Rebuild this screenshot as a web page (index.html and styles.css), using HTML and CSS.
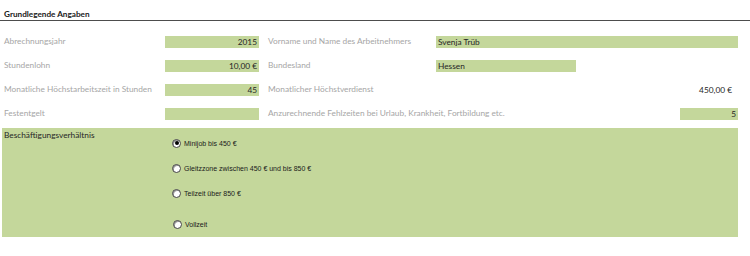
FILE: index.html
```html
<!DOCTYPE html>
<html lang="de">
<head>
<meta charset="utf-8">
<title>Grundlegende Angaben</title>
<link rel="stylesheet" href="styles.css">
</head>
<body>
<div class="page">
  <h1 class="title">Grundlegende Angaben</h1>
  <div class="grid">
    <div class="lbl">Abrechnungsjahr</div>
    <div class="cell">2015</div>
    <div class="lbl lbl2">Vorname und Name des Arbeitnehmers</div>
    <div class="cell cell-wide left">Svenja Trüb</div>

    <div class="lbl">Stundenlohn</div>
    <div class="cell">10,00 €</div>
    <div class="lbl lbl2">Bundesland</div>
    <div class="cell cell-mid left">Hessen</div>

    <div class="lbl">Monatliche Höchstarbeitszeit in Stunden</div>
    <div class="cell">45</div>
    <div class="lbl lbl2">Monatlicher Höchstverdienst</div>
    <div class="plain">450,00 €</div>

    <div class="lbl">Festentgelt</div>
    <div class="cell"></div>
    <div class="lbl lbl2">Anzurechnende Fehlzeiten bei Urlaub, Krankheit, Fortbildung etc.</div>
    <div class="cell cell-small">5</div>
  </div>
  <div class="box">
    <div class="box-title">Beschäftigungsverhältnis</div>
    <div class="radios">
      <label class="opt o1"><span class="radio checked"></span>Minijob bis 450 €</label>
      <label class="opt o2"><span class="radio"></span>Gleitzzone zwischen 450 € und bis 850 €</label>
      <label class="opt o3"><span class="radio"></span>Teilzeit über 850 €</label>
      <label class="opt o4"><span class="radio"></span>Vollzeit</label>
    </div>
  </div>
</div>
</body>
</html>
```
FILE: styles.css
```css
html, body {
  margin: 0;
  padding: 0;
  background: #ffffff;
}
.page {
  width: 750px;
  height: 256px;
  font-family: Lato, "Open Sans", sans-serif;
  font-size: 8.3px;
  color: #262626;
}
.title {
  margin: 0;
  padding: 9px 0 0 4px;
  height: 11px;
  font-size: 8.2px;
  font-weight: bold;
  line-height: 11px;
  color: #1a1a1a;
  border-bottom: 1px solid #4d4d4d;
}
.grid {
  display: grid;
  grid-template-columns: 161px 94px 177px 302px;
  grid-auto-rows: 12px;
  row-gap: 12px;
  padding: 14px 0 0 4px;
}
.lbl {
  color: #a6a6a6;
  line-height: 12px;
  white-space: nowrap;
}
.lbl2 {
  padding-left: 9px;
}
.cell {
  background: #c4d79b;
  text-align: right;
  line-height: 12px;
  padding-right: 2px;
  margin-top: 1px;
  height: 12px;
}
.cell.left {
  text-align: left;
  padding-left: 2px;
}
.cell-mid {
  width: 136px;
}
.cell-small {
  width: 56px;
  justify-self: end;
}
.plain {
  text-align: right;
  line-height: 12px;
  padding-right: 6px;
  margin-top: 1px;
}
.box {
  margin: 9px 12px 0 2px;
  height: 109px;
  background: #c4d79b;
  display: flex;
  padding-left: 2px;
}
.box-title {
  width: 168px;
  line-height: 12px;
  padding-top: 1px;
}
.radios {
  display: flex;
  flex-direction: column;
  font-family: "Liberation Sans", Arial, sans-serif;
  font-size: 7px;
  color: #1a1a1a;
}
.opt {
  display: flex;
  align-items: center;
  gap: 3px;
  height: 10px;
}
.o1 { margin-top: 10px; }
.o2 { margin-top: 15px; }
.o3 { margin-top: 15px; }
.o4 { margin-top: 21px; margin-left: 1px; }
.radio {
  width: 7px;
  height: 7px;
  border-radius: 50%;
  background: #ffffff;
  border: 1px solid #444444;
  box-shadow: inset 1px 1px 0 #9a9a9a;
  box-sizing: content-box;
  display: inline-block;
  position: relative;
}
.radio.checked::after {
  content: "";
  position: absolute;
  left: 1.5px;
  top: 1.5px;
  width: 4px;
  height: 4px;
  border-radius: 50%;
  background: #000000;
}
```
